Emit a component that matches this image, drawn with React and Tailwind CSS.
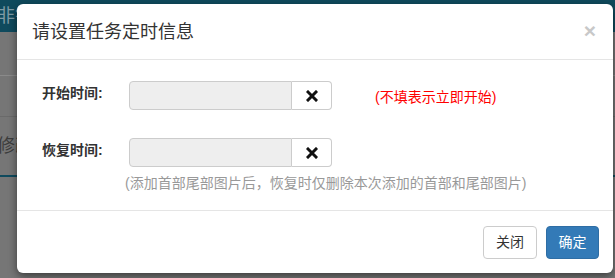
import React from 'react';

const ClearIcon = () => (
  <svg width="12" height="12" viewBox="0 0 12 12">
    <path d="M2 2 L10 10 M10 2 L2 10" stroke="#111" strokeWidth="3" strokeLinecap="square" />
  </svg>
);

const TimeField = () => (
  <div className="flex w-[203px] h-[29px]">
    <div className="flex-1 bg-[#eeeeee] border border-[#cccccc] rounded-l-[4px]" />
    <button className="w-[40px] flex items-center justify-center bg-white border border-l-0 border-[#cccccc] rounded-r-[4px]">
      <ClearIcon />
    </button>
  </div>
);

const App = () => {
  return (
    <div
      className="relative w-[615px] h-[278px] overflow-hidden bg-[#767676]"
      style={{ fontFamily: '"Liberation Sans", "Noto Sans CJK SC", sans-serif' }}
    >
      {/* page behind the backdrop */}
      <div className="h-[32px] bg-[#0f4a5d] flex items-center -ml-[3px]">
        <span className="text-[18px] text-[#7f9ba6]">非铬</span>
      </div>
      <div className="h-[44px] border-b border-[#8a8a8a]" />
      <div className="h-[41px] border-b border-[#6a6a6a]" />
      <div className="h-[60px] flex items-center -ml-[3px] border-b-2 border-[#0f4a5d]">
        <span className="text-[18px] text-[#3c3c3c]">修改</span>
      </div>

      {/* modal */}
      <div className="absolute left-[17px] top-[4px] w-[596px] h-[269px] bg-white rounded-[6px] shadow-[0_3px_9px_rgba(0,0,0,0.5)] flex flex-col">
        <div className="h-[56px] px-[15px] flex items-center justify-between border-b border-[#e5e5e5]">
          <h4 className="text-[18px] text-[#333333] leading-none">请设置任务定时信息</h4>
          <span className="text-[21px] font-bold text-[#c8c8c8] leading-none -mt-[2px] mr-[2px]">×</span>
        </div>

        <div className="flex-1 pl-[25px] pt-[21px]">
          <div className="flex items-center">
            <label className="w-[87px] text-[14px] font-bold text-[#333333] -mt-[4px]">开始时间:</label>
            <TimeField />
            <span className="ml-[43px] mt-[4px] text-[14px] text-[#ff0000]">(不填表示立即开始)</span>
          </div>
          <div className="flex items-center mt-[28px]">
            <label className="w-[87px] text-[14px] font-bold text-[#333333] -mt-[4px]">恢复时间:</label>
            <TimeField />
          </div>
          <p className="ml-[83px] mt-[6px] text-[14px] leading-[20px] text-[#999999]">
            (添加首部尾部图片后，恢复时仅删除本次添加的首部和尾部图片)
          </p>
        </div>

        <div className="h-[63px] border-t border-[#e5e5e5] flex items-center justify-end gap-[9px] pr-[14px]">
          <button className="w-[54px] h-[33px] bg-white border border-[#cccccc] rounded-[4px] text-[14px] text-[#333333]">
            关闭
          </button>
          <button className="w-[53px] h-[33px] bg-[#337ab7] border border-[#2e6da4] rounded-[4px] text-[14px] text-white">
            确定
          </button>
        </div>
      </div>
    </div>
  );
};

export default App;
